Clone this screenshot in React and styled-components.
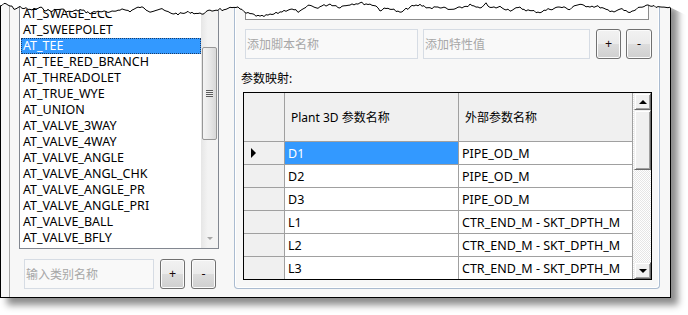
import React from 'react';
import styled, { createGlobalStyle, css } from 'styled-components';

const GlobalStyle = createGlobalStyle`
  html, body { margin: 0; padding: 0; background: #fff; }
  body {
    font-family: "Noto Sans", "Noto Sans CJK SC", sans-serif;
    font-size: 12px;
    color: #000;
  }
`;

const Page = styled.div`
  position: relative;
  width: 688px;
  height: 315px;
  overflow: hidden;
`;

const Window = styled.div`
  width: 671px;
  height: 298px;
  box-sizing: border-box;
  border: 1px solid #000;
  border-top: none;
  background: #f7f7f7;
  box-shadow: 7px 7px 7px rgba(0, 0, 0, 0.45);
  display: flex;
  padding-left: 8px;
`;

const LeftPanel = styled.div`
  width: 225px;
  box-sizing: border-box;
  border-left: 1px solid #a8a8a8;
  padding: 5px 0 0 9px;
  display: flex;
  flex-direction: column;
`;

const ListBox = styled.div`
  width: 200px;
  height: 244px;
  box-sizing: border-box;
  border: 1px solid #828790;
  background: #fff;
  display: flex;
  overflow: hidden;
`;

const Items = styled.div`
  width: 181px;
  display: flex;
  flex-direction: column;
`;

const Item = styled.div`
  height: 16px;
  line-height: 16px;
  font-size: 12.5px;
  padding-left: 3px;
  white-space: nowrap;
  box-sizing: border-box;
  ${(p) =>
    p.$selected &&
    css`
      background: #3399ff;
      color: #fff;
      outline: 1px dotted #1c3b66;
      outline-offset: -1px;
      margin-left: 1px;
      padding-left: 2px;
    `}
`;

const ListScroll = styled.div`
  width: 17px;
  background: linear-gradient(to right, #e6e6e6, #f3f3f3 40%, #f3f3f3);
  display: flex;
  flex-direction: column;
  align-items: center;
  padding-top: 41px;
  box-sizing: border-box;
`;

const ListThumb = styled.div`
  width: 15px;
  height: 93px;
  box-sizing: border-box;
  border: 1px solid #979797;
  border-radius: 2px;
  background: linear-gradient(to right, #f4f4f4, #e8e8e8 50%, #d8d8d8);
  display: flex;
  align-items: center;
  justify-content: center;
`;

const Grip = styled.div`
  width: 7px;
  height: 7px;
  background: repeating-linear-gradient(
    to bottom,
    #5c5c5c 0,
    #5c5c5c 1px,
    #eeeeee 1px,
    #eeeeee 2px
  );
`;

const ListDown = styled.div`
  margin-top: auto;
  margin-bottom: 8px;
  width: 0;
  height: 0;
  border-left: 3px solid transparent;
  border-right: 3px solid transparent;
  border-top: 3px solid #a6a6a6;
`;

const Row = styled.div`
  display: flex;
  align-items: flex-start;
  gap: ${(p) => p.$gap || 6}px;
  margin-top: ${(p) => p.$top || 0}px;
  padding-left: ${(p) => p.$left || 0}px;
`;

const TextBox = styled.input`
  width: ${(p) => p.$w}px;
  height: 30px;
  box-sizing: border-box;
  border: 1px solid #d6dce4;
  background: #f9f9f9;
  padding: 0 1px;
  margin: 0;
  font-family: "Noto Sans", "Noto Sans CJK SC", sans-serif;
  font-size: 12px;
  outline: none;
  &::placeholder { color: #a7a7a7; }
`;

const Btn = styled.button`
  width: ${(p) => p.$w || 25}px;
  height: 30px;
  box-sizing: border-box;
  margin: 0;
  padding: 0;
  border: 1px solid #707070;
  border-radius: 3px;
  background: linear-gradient(#f2f2f2 0%, #ebebeb 50%, #dddddd 50%, #cfcfcf 100%);
  box-shadow: inset 0 0 0 1px #fbfbfb;
  font-family: "Noto Sans", sans-serif;
  font-size: 12.5px;
  color: #1a0a0a;
  line-height: 1;
`;

const GroupBox = styled.div`
  width: 426px;
  height: 289px;
  box-sizing: border-box;
  border: 1px solid #aabbd0;
  border-top: none;
  border-radius: 0 0 4px 4px;
  box-shadow: inset 1px 0 0 #fff, inset -1px -1px 0 #fff;
  display: flex;
  flex-direction: column;
`;

const TopBox = styled.div`
  margin-left: 10px;
  width: 404px;
  height: 20px;
  box-sizing: border-box;
  border: 1px solid #8c8c8c;
  border-top: none;
  background: #fff;
`;

const Label = styled.div`
  margin: 12px 0 0 6px;
  line-height: 16px;
  height: 16px;
`;

const Grid = styled.div`
  margin: 5px 0 0 8px;
  width: 409px;
  height: 188px;
  box-sizing: border-box;
  border: 1px solid #000;
  display: flex;
  background: #fff;
`;

const Table = styled.div`
  width: 389px;
  height: 186px;
  overflow: hidden;
  display: grid;
  grid-template-columns: 41px 174px 174px;
  grid-template-rows: 49px repeat(6, 23px);
`;

const Cell = styled.div`
  box-sizing: border-box;
  border-right: 1px solid #a0a0a0;
  border-bottom: 1px solid #a0a0a0;
  display: flex;
  align-items: center;
  white-space: nowrap;
  font-size: ${(p) => (p.$head ? 12 : 12.5)}px;
  padding-left: ${(p) => (p.$head ? 6 : 3)}px;
  background: ${(p) => (p.$head || p.$rowHead ? '#f0f0f0' : '#fff')};
  ${(p) =>
    p.$selected &&
    css`
      background: #3399ff;
      color: #fff;
    `}
`;

const Marker = styled.div`
  width: 0;
  height: 0;
  margin-left: 4px;
  border-top: 5px solid transparent;
  border-bottom: 5px solid transparent;
  border-left: 5px solid #000;
`;

const VScroll = styled.div`
  width: 18px;
  height: 186px;
  display: flex;
  flex-direction: column;
  padding-left: 1px;
  box-sizing: border-box;
  background-color: #f6f6f6;
  background-image: repeating-conic-gradient(#ffffff 0 25%, #e6e6e6 0 50%);
  background-size: 2px 2px;
`;

const Raised = styled.div`
  width: 17px;
  height: ${(p) => p.$h}px;
  box-sizing: border-box;
  background: #f0f0f0;
  border-top: 1px solid #f0f0f0;
  border-left: 1px solid #f0f0f0;
  border-right: 1px solid #696969;
  border-bottom: 1px solid #696969;
  box-shadow: inset 1px 1px 0 #fff, inset -1px -1px 0 #a0a0a0;
  display: flex;
  align-items: center;
  justify-content: center;
  margin-top: ${(p) => p.$top || 0}px;
`;

const Arrow = styled.div`
  width: 0;
  height: 0;
  border-left: 4px solid transparent;
  border-right: 4px solid transparent;
  ${(p) =>
    p.$up
      ? css`border-bottom: 4px solid #000;`
      : css`border-top: 4px solid #000;`}
`;

const TornEdge = styled.svg`
  position: absolute;
  left: 0;
  top: 0;
`;

const listItems = [
  'AT_SWAGE_ECC', 'AT_SWEEPOLET', 'AT_TEE', 'AT_TEE_RED_BRANCH', 'AT_THREADOLET',
  'AT_TRUE_WYE', 'AT_UNION', 'AT_VALVE_3WAY', 'AT_VALVE_4WAY', 'AT_VALVE_ANGLE',
  'AT_VALVE_ANGL_CHK', 'AT_VALVE_ANGLE_PR', 'AT_VALVE_ANGLE_PRI', 'AT_VALVE_BALL',
  'AT_VALVE_BFLY',
];

const params = [
  ['D1', 'PIPE_OD_M'],
  ['D2', 'PIPE_OD_M'],
  ['D3', 'PIPE_OD_M'],
  ['L1', 'CTR_END_M - SKT_DPTH_M'],
  ['L2', 'CTR_END_M - SKT_DPTH_M'],
  ['L3', 'CTR_END_M - SKT_DPTH_M'],
];

// rough outline of the torn top edge, jittered below
const tearBase = [
  [0, 6], [5, 4], [10, 6], [15, 9], [20, 7], [30, 10], [40, 8], [50, 11], [60, 9], [70, 12],
  [80, 10], [90, 13], [100, 11], [110, 13], [120, 9], [130, 11], [140, 7], [150, 11], [160, 9],
  [170, 13], [180, 14], [190, 12], [200, 14], [210, 11], [220, 9], [225, 11], [235, 6], [240, 9],
  [245, 13], [255, 15], [260, 17], [275, 14], [280, 12], [290, 9], [300, 12], [310, 5], [315, 8],
  [330, 4], [340, 7], [350, 4], [360, 3], [375, 5], [380, 10], [390, 8], [400, 13], [410, 7],
  [420, 5], [430, 8], [440, 7], [450, 10], [460, 8], [470, 5], [480, 9], [485, 3], [490, 8],
  [500, 7], [510, 10], [520, 8], [530, 11], [540, 12], [550, 9], [560, 7], [570, 9], [575, 5],
  [590, 6], [600, 7], [610, 12], [620, 9], [630, 13], [640, 7], [650, 6], [660, 8], [671, 6],
];

const tearPoints = (() => {
  let seed = 7;
  const pts = [];
  for (let x = 0; x <= 671; x += 2) {
    let i = 0;
    while (i < tearBase.length - 2 && tearBase[i + 1][0] < x) i++;
    const [x0, y0] = tearBase[i];
    const [x1, y1] = tearBase[i + 1];
    const t = Math.min(1, Math.max(0, (x - x0) / (x1 - x0)));
    seed = (seed * 9301 + 49297) % 233280;
    const n = (seed / 233280) * 2.6 - 1.3;
    const y = Math.min(18, Math.max(2, y0 + (y1 - y0) * t + n));
    pts.push([x, +y.toFixed(1)]);
  }
  return pts;
})();

const Tear = () => {
  const line = tearPoints.map((p) => p.join(',')).join(' ');
  const last = tearPoints[tearPoints.length - 1];
  const fill = `0,0 ${line} ${last[0]},${last[1]} 688,16 688,0`;
  return (
    <TornEdge width="688" height="22" viewBox="0 0 688 22">
      <polygon points={fill} fill="#fff" />
      <polyline points={line} fill="none" stroke="#000" strokeWidth="1" />
    </TornEdge>
  );
};

export default function App() {
  return (
    <>
      <GlobalStyle />
      <Page>
        <Window>
          <LeftPanel>
            <ListBox>
              <Items>
                {listItems.map((name) => (
                  <Item key={name} $selected={name === 'AT_TEE'}>{name}</Item>
                ))}
              </Items>
              <ListScroll>
                <ListThumb><Grip /></ListThumb>
                <ListDown />
              </ListScroll>
            </ListBox>
            <Row $top={10} $left={5} $gap={6}>
              <TextBox $w={130} placeholder="输入类别名称" readOnly />
              <Btn>+</Btn>
              <Btn>-</Btn>
            </Row>
          </LeftPanel>

          <GroupBox>
            <TopBox />
            <Row $top={9} $left={10} $gap={5}>
              <TextBox $w={173} placeholder="添加脚本名称" readOnly />
              <TextBox $w={167} placeholder="添加特性值" readOnly />
              <Row $gap={5} $left={1}>
                <Btn>+</Btn>
                <Btn $w={26}>-</Btn>
              </Row>
            </Row>
            <Label>参数映射:</Label>
            <Grid>
              <Table>
                <Cell $rowHead />
                <Cell $head>Plant 3D 参数名称</Cell>
                <Cell $head>外部参数名称</Cell>
                {params.map(([p, ext], i) => (
                  <React.Fragment key={p}>
                    <Cell $rowHead>{i === 0 && <Marker />}</Cell>
                    <Cell $selected={i === 0}>{p}</Cell>
                    <Cell>{ext}</Cell>
                  </React.Fragment>
                ))}
              </Table>
              <VScroll>
                <Raised $h={17}><Arrow $up /></Raised>
                <Raised $h={60} />
                <Raised $h={17} $top={92}><Arrow /></Raised>
              </VScroll>
            </Grid>
          </GroupBox>
        </Window>
        <Tear />
      </Page>
    </>
  );
}
